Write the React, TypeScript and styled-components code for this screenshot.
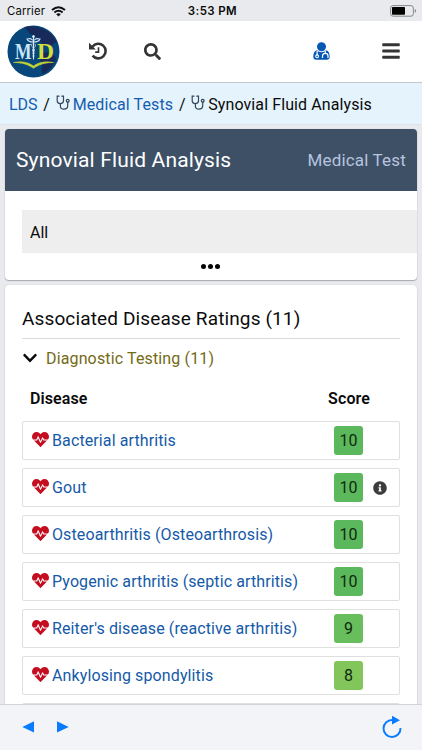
import React from "react";
import styled, { createGlobalStyle } from "styled-components";
import { FaSearch, FaBars, FaHeartbeat, FaInfoCircle, FaChevronDown } from "react-icons/fa";

const Global = createGlobalStyle`
  * { box-sizing: border-box; }
  body { margin: 0; background: #e8eaee; overflow: hidden; }
  svg { flex: none; }
`;

const Screen = styled.div`
  width: 422px;
  height: 750px;
  overflow: hidden;
  display: flex;
  flex-direction: column;
  background: #e8eaee;
  font-family: Roboto, "Liberation Sans", sans-serif;
  font-size: 16px;
  color: #0b0b0b;
`;

const StatusBar = styled.div`
  flex: none;
  height: 21px;
  padding: 0 5px 0 7px;
  display: grid;
  grid-template-columns: 1fr auto 1fr;
  align-items: center;
  background: #e8eaed;
  font: 400 11.3px Inter, sans-serif;
`;

const Carrier = styled.div`
  display: flex;
  align-items: center;
  gap: 6px;
  padding-top: 1px;
  letter-spacing: 0.15px;
`;

const Clock = styled.div`
  font-weight: 600;
  font-size: 11.5px;
  letter-spacing: 0.4px;
  padding: 1px 0 0 1px;
`;

const BatterySlot = styled.div`
  display: flex;
  justify-content: flex-end;
`;

const Header = styled.header`
  flex: none;
  height: 62px;
  padding: 0 0 1px 7px;
  display: flex;
  align-items: center;
  background: #fff;
  border-bottom: 1px solid #c3c9ce;
`;

const IconSlot = styled.span<{ $left: number; $size: number; $color?: string }>`
  display: flex;
  margin-left: ${(p) => p.$left}px;
  font-size: ${(p) => p.$size}px;
  color: ${(p) => p.$color ?? "#343434"};
`;

const Breadcrumbs = styled.nav`
  flex: none;
  height: 42px;
  padding: 1px 0 0 9px;
  display: flex;
  align-items: center;
  background: #e5f3fc;
  border-bottom: 1px solid #dce5eb;
  white-space: nowrap;
`;

const Crumb = styled.span<{ $link?: boolean; $spacing?: number }>`
  color: ${(p) => (p.$link ? "#155db0" : "#0b0b0b")};
  letter-spacing: ${(p) => p.$spacing ?? 0}px;
`;

const Slash = styled.span`
  width: 18px;
  text-align: center;
`;

const Scope = styled.svg`
  width: 14px;
  height: 16px;
  margin-right: 3px;
  margin-top: -2px;
`;

const Content = styled.main`
  flex: 1;
  min-height: 0;
  overflow: hidden;
  padding: 4px 5px 0;
`;

const Card = styled.section`
  background: #fff;
  border-radius: 4px;
  box-shadow: 0 1px 1px rgba(60, 55, 70, 0.35), 0 0 1px rgba(60, 60, 80, 0.25);
  overflow: hidden;
`;

const FilterCard = styled(Card)`
  height: 151px;
  display: flex;
  flex-direction: column;
`;

const CardHeader = styled.div`
  flex: none;
  height: 62px;
  padding: 0 11px;
  display: flex;
  align-items: center;
  justify-content: space-between;
  background: #3d5066;
  color: #fff;
`;

const Title = styled.h1`
  margin: 0;
  font-size: 21px;
  font-weight: 400;
  letter-spacing: 0.15px;
`;

const Kind = styled.span`
  font-size: 17px;
  letter-spacing: 0.18px;
  color: #b6c4df;
`;

const Filter = styled.div`
  height: 43px;
  margin: 19px 0 0 17px;
  padding: 2px 8px 0;
  display: flex;
  align-items: center;
  background: #eeeeee;
`;

const Dots = styled.div`
  display: flex;
  justify-content: center;
  gap: 2px;
  margin-top: 11px;
  padding-right: 2px;

  i {
    width: 5px;
    height: 5px;
    border-radius: 50%;
    background: #050505;
  }
`;

const RatingsCard = styled(Card)`
  height: 500px;
  margin-top: 5px;
  padding: 17px 17px 0;
`;

const SectionTitle = styled.h2`
  height: 37px;
  margin: 0;
  padding-top: 6px;
  border-bottom: 1px solid #dadada;
  font-size: 19px;
  line-height: 22px;
  font-weight: 400;
  letter-spacing: 0.13px;
`;

const Group = styled.div`
  height: 38px;
  display: flex;
  align-items: center;
  gap: 8px;
  color: #736a16;
  letter-spacing: 0.14px;

  svg { color: #0b0b0b; }
`;

const ColumnHeads = styled.div`
  height: 44px;
  display: flex;
  justify-content: space-between;
  align-items: center;
  padding: 0 30px 1px 8px;
  font-weight: 600;
  letter-spacing: 0.1px;
`;

const Rows = styled.div`
  display: flex;
  flex-direction: column;
  gap: 8px;
`;

const Row = styled.div`
  flex: none;
  height: 39px;
  padding: 0 0 0 9px;
  display: flex;
  align-items: center;
  border: 1px solid #dfdfdf;
  border-radius: 2px;
`;

const Name = styled.a`
  flex: 1;
  margin-left: 3px;
  color: #155aa8;
  white-space: nowrap;
  letter-spacing: 0.11px;
`;

const Heart = styled(FaHeartbeat)`
  width: 17px;
  height: 17px;
  margin-top: -3px;
  color: #c40e20;
`;

const Score = styled.span<{ $color: string }>`
  width: 29px;
  height: 29px;
  display: grid;
  place-items: center;
  border-radius: 3px;
  background: ${(p) => p.$color};
  color: #10290f;
`;

const Note = styled.span`
  width: 36px;
  height: 14px;
  padding-left: 10px;
  display: flex;
  align-items: center;
  color: #3c3c3c;
`;

const Toolbar = styled.footer`
  flex: none;
  height: 46px;
  padding: 0 20px 1px 22px;
  display: flex;
  align-items: center;
  background: #f3f4f7;
  border-top: 1px solid #d2d3d7;
`;

const ReloadSlot = styled.span`
  display: flex;
  margin: -1px 0 0 auto;
`;

const Stethoscope = () => (
  <Scope viewBox="0 0 14 16" fill="none" stroke="#34465c" strokeWidth="1.2" strokeLinecap="round">
    <path d="M3 1.200H1.200v4.200c0 2 1.400 3.200 3.100 3.200s3.200-1.200 3.200-3.200V1.200H5.800" />
    <path d="M4.400 8.800v2.100c0 2.100 1.300 3.200 3.500 3.200s3.800-1.200 3.800-3.300V7.300" />
    <circle cx="11.700" cy="5.800" r="1.400" />
  </Scope>
);

const Logo = () => (
  <svg width="53" height="53" viewBox="0 0 53 53">
    <circle cx="26.500" cy="26.500" r="26" fill="#07477c" />
    <path d="M17 2C29-1 44 4 50 17c-5 1-5 6-11 4-7-2-4-7-10-9-5-1-7-5-12-10Z" fill="#182a59" />
    <path d="M36 28c5-2 10 1 13 5-2 7-7 13-13 16-3-5 1-9-3-14Z" fill="#182a59" />
    <text x="8" y="34" fill="#c7e6f6" fontFamily="Liberation Serif" fontSize="24" fontWeight="700" textLength="16.500" lengthAdjust="spacingAndGlyphs">M</text>
    <text x="30" y="34" fill="#d4dd39" fontFamily="Liberation Serif" fontSize="24" fontWeight="700" textLength="17" lengthAdjust="spacingAndGlyphs">D</text>
    <g fill="none" stroke="#d8e7f3" strokeLinecap="round">
      <path d="M26.500 11v23" strokeWidth="1.100" />
      <path d="M25.500 15c-2-2.500-3.500-1-5.500-1 1 2.500 4 3 6.500 3s5.500-.5 6.500-3c-2 0-3.500-1.500-5.500 1" strokeWidth="1.100" />
      <path d="M25 19c-2 3 3 4 2.500 6.500-.5 2-2.500 2-1.500 3.500 1 1 1.500 2 .5 3.500M28 19c2 3-3 4-2.500 6.500.5 2 2.500 2 1.500 3.500-1 1-1.500 2-.5 3.500" strokeWidth=".8" />
    </g>
    <circle cx="26.500" cy="11.500" r="1.300" fill="#edf5fb" />
    <path d="M6.500 37.500c7-1.300 14-.8 20 3.500 6-4.300 13-4.800 20-3.500-7 0-13 1.200-18 4.500l-2 1.300-2-1.300c-5-3.300-11-4.500-18-4.500Z" fill="#c3d337" stroke="#c3d337" strokeWidth=".6" />
  </svg>
);

const History = () => (
  <svg width="18" height="18" viewBox="0 0 18 18" fill="none">
    <path d="M3.500 4.700A7.300 7.300 0 1 1 3.600 13.600" stroke="currentColor" strokeWidth="2.600" />
    <path d="M0 .7v6.800h6.800Z" fill="currentColor" />
    <path d="M9.500 5.200v4.900H6.200" stroke="currentColor" strokeWidth="1.600" />
  </svg>
);

const Doctor = () => (
  <svg width="17" height="18" viewBox="0 0 17 18" fill="none">
    <circle cx="8.500" cy="4.700" r="4.500" fill="currentColor" />
    <path d="M3.900 8.200C1.200 8.800.3 11.500.3 14.800c0 1.900 1 3 2.900 3h10.600c1.900 0 2.900-1.100 2.900-3 0-3.300-.9-6-3.600-6.600a6.300 6.300 0 0 1-9.200 0Z" fill="currentColor" />
    <path d="M4.100 9v4M12.300 9v2.200M9.500 16v-2c0-1.700 1.200-2.700 2.800-2.700s2.700 1 2.700 2.700v2" stroke="#fff" strokeWidth="1.200" />
    <circle cx="4.100" cy="14.300" r="1.400" stroke="#fff" strokeWidth="1.100" />
  </svg>
);

const Wifi = () => (
  <svg width="15" height="11" viewBox="0 0 15 11" fill="none" stroke="#111" strokeWidth="2">
    <path d="M1 4.100Q7.500-1.500 14 4.100M3.400 6.500Q7.500 3 11.600 6.500" />
    <path d="M5.200 8.200Q7.500 6.300 9.800 8.200L7.500 10.600Z" fill="#111" stroke="none" />
  </svg>
);

const Battery = () => (
  <svg width="27" height="12" viewBox="0 0 27 12">
    <rect x=".6" y=".6" width="22.800" height="10.600" rx="2.500" fill="none" stroke="#858789" />
    <rect x="2" y="2" width="13" height="7.800" rx=".7" fill="#000" />
    <path d="M24.800 4c1.800.6 1.800 3.200 0 3.800Z" fill="#858789" />
  </svg>
);

const Arrow = ({ back }: { back?: boolean }) => (
  <svg width="12" height="12" viewBox="0 0 12 12" fill="#087cff">
    <path d={back ? "M12 .2v11.400L.3 5.900Z" : "M0 .2v11.400L11.700 5.900Z"} />
  </svg>
);

const Reload = () => (
  <svg width="20" height="24" viewBox="0 0 20 24">
    <path d="M10.500 5A8.500 8.500 0 1 0 18.500 13" fill="none" stroke="#087cff" strokeWidth="1.900" />
    <path d="M10 .8v8.800L18 5.200Z" fill="#087cff" />
  </svg>
);

const diseases = [
  { name: "Bacterial arthritis", score: 10, color: "#5cb85c" },
  { name: "Gout", score: 10, color: "#5cb85c", info: true },
  { name: "Osteoarthritis (Osteoarthrosis)", score: 10, color: "#5cb85c" },
  { name: "Pyogenic arthritis (septic arthritis)", score: 10, color: "#5cb85c" },
  { name: "Reiter's disease (reactive arthritis)", score: 9, color: "#68bd5c" },
  { name: "Ankylosing spondylitis", score: 8, color: "#82c65b" },
  { name: "", score: 8, color: "#82c65b" },
];

export default function App() {
  return (
    <Screen>
      <Global />
      <StatusBar>
        <Carrier>Carrier <Wifi /></Carrier>
        <Clock>3:53 PM</Clock>
        <BatterySlot><Battery /></BatterySlot>
      </StatusBar>
      <Header>
        <Logo />
        <IconSlot $left={29} $size={18}><History /></IconSlot>
        <IconSlot $left={37} $size={17}><FaSearch /></IconSlot>
        <IconSlot $left={152} $size={18} $color="#0758b5"><Doctor /></IconSlot>
        <IconSlot $left={51} $size={20}><FaBars /></IconSlot>
      </Header>
      <Breadcrumbs>
        <Crumb $link>LDS</Crumb><Slash>/</Slash>
        <Stethoscope /><Crumb $link $spacing={0.12}>Medical Tests</Crumb><Slash>/</Slash>
        <Stethoscope /><Crumb $spacing={0.1}>Synovial Fluid Analysis</Crumb>
      </Breadcrumbs>
      <Content>
        <FilterCard>
          <CardHeader><Title>Synovial Fluid Analysis</Title><Kind>Medical Test</Kind></CardHeader>
          <Filter>All</Filter>
          <Dots><i /><i /><i /></Dots>
        </FilterCard>
        <RatingsCard>
          <SectionTitle>Associated Disease Ratings (11)</SectionTitle>
          <Group><FaChevronDown size={16} />Diagnostic Testing (11)</Group>
          <ColumnHeads><span>Disease</span><span>Score</span></ColumnHeads>
          <Rows>
            {diseases.map((d, i) => (
              <Row key={i}>
                {d.name && <Heart />}
                <Name>{d.name}</Name>
                {d.name && <Score $color={d.color}>{d.score}</Score>}
                <Note>{d.info && <FaInfoCircle size={14} />}</Note>
              </Row>
            ))}
          </Rows>
        </RatingsCard>
      </Content>
      <Toolbar>
        <Arrow back />
        <IconSlot $left={23} $size={12}><Arrow /></IconSlot>
        <ReloadSlot><Reload /></ReloadSlot>
      </Toolbar>
    </Screen>
  );
}
